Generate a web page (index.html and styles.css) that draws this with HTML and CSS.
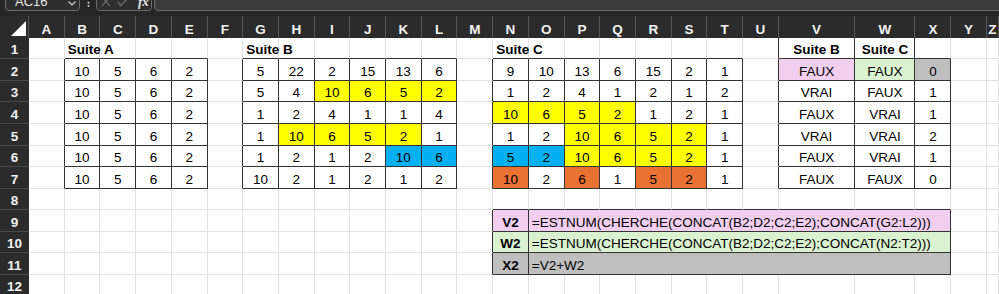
FILE: index.html
```html
<!DOCTYPE html>
<html lang="fr">
<head>
<meta charset="utf-8">
<title>Suites</title>
<link rel="stylesheet" href="styles.css">
</head>
<body>
<div class="topbar">
  <div class="namebox"><span class="nb-text">AC16</span><svg class="chev" width="8" height="5" viewBox="0 0 8 5"><path d="M0.5 0.5 L4 4 L7.5 0.5" fill="none" stroke="#cfcfcf" stroke-width="1.2"/></svg></div>
  <svg class="sep" width="3" height="8" viewBox="0 0 3 8"><circle cx="1.5" cy="2.7" r="1" fill="#d0d0d0"/><circle cx="1.5" cy="5.9" r="1" fill="#d0d0d0"/></svg>
  <div class="fxbox">
    <svg class="ico" width="10" height="8" viewBox="0 0 10 8"><path d="M1 -2 L9 7 M9 -2 L1 7" stroke="#6e6e6e" stroke-width="1.2" fill="none"/></svg>
    <svg class="ico ok" width="12" height="8" viewBox="0 0 12 8"><path d="M0.5 2.5 L4 6.5 L11.5 -1.5" stroke="#6e6e6e" stroke-width="1.2" fill="none"/></svg>
    <span class="fx">fx</span>
  </div>
  <div class="finput"></div>
</div>

<div class="sheet">
  <div class="row head">
    <div class="corner"><svg width="15" height="15" viewBox="0 0 15 15"><path d="M15 0 L15 15 L0 15 Z" fill="#ffffff"/></svg></div>
    <div>A</div><div>B</div><div>C</div><div>D</div><div>E</div><div>F</div><div>G</div><div>H</div><div>I</div><div>J</div><div>K</div><div>L</div><div>M</div><div>N</div><div>O</div><div>P</div><div>Q</div><div>R</div><div>S</div><div>T</div><div>U</div><div>V</div><div>W</div><div>X</div><div>Y</div><div>Z</div>
  </div>

  <div class="row">
    <div class="rh">1</div>
    <div></div><div class="bb l bold">Suite A</div><div class="bb"></div><div class="bb"></div><div class="bb"></div>
    <div></div><div class="bb l bold">Suite B</div><div class="bb"></div><div class="bb"></div><div class="bb"></div><div class="bb"></div><div class="bb"></div>
    <div></div><div class="bb l bold">Suite C</div><div class="bb"></div><div class="bb"></div><div class="bb"></div><div class="bb"></div><div class="bb"></div><div class="bb"></div>
    <div class="br"></div><div class="b bold">Suite B</div><div class="b bold">Suite C</div><div class="bb"></div><div></div><div></div>
  </div>

  <div class="row">
    <div class="rh">2</div>
    <div class="br"></div><div class="b">10</div><div class="b">5</div><div class="b">6</div><div class="b">2</div>
    <div class="br"></div><div class="b">5</div><div class="b">22</div><div class="b">2</div><div class="b">15</div><div class="b">13</div><div class="b">6</div>
    <div class="br"></div><div class="b">9</div><div class="b">10</div><div class="b">13</div><div class="b">6</div><div class="b">15</div><div class="b">2</div><div class="b">1</div>
    <div class="br"></div><div class="b pk">FAUX</div><div class="b gr">FAUX</div><div class="b gy">0</div><div></div><div></div>
  </div>

  <div class="row">
    <div class="rh">3</div>
    <div class="br"></div><div class="b">10</div><div class="b">5</div><div class="b">6</div><div class="b">2</div>
    <div class="br"></div><div class="b">5</div><div class="b">4</div><div class="b y">10</div><div class="b y">6</div><div class="b y">5</div><div class="b y">2</div>
    <div class="br"></div><div class="b">1</div><div class="b">2</div><div class="b">4</div><div class="b">1</div><div class="b">2</div><div class="b">1</div><div class="b">2</div>
    <div class="br"></div><div class="b">VRAI</div><div class="b">FAUX</div><div class="b">1</div><div></div><div></div>
  </div>

  <div class="row">
    <div class="rh">4</div>
    <div class="br"></div><div class="b">10</div><div class="b">5</div><div class="b">6</div><div class="b">2</div>
    <div class="br"></div><div class="b">1</div><div class="b">2</div><div class="b">4</div><div class="b">1</div><div class="b">1</div><div class="b">4</div>
    <div class="br"></div><div class="b y">10</div><div class="b y">6</div><div class="b y">5</div><div class="b y">2</div><div class="b">1</div><div class="b">2</div><div class="b">1</div>
    <div class="br"></div><div class="b">FAUX</div><div class="b">VRAI</div><div class="b">1</div><div></div><div></div>
  </div>

  <div class="row">
    <div class="rh">5</div>
    <div class="br"></div><div class="b">10</div><div class="b">5</div><div class="b">6</div><div class="b">2</div>
    <div class="br"></div><div class="b">1</div><div class="b y">10</div><div class="b y">6</div><div class="b y">5</div><div class="b y">2</div><div class="b">1</div>
    <div class="br"></div><div class="b">1</div><div class="b">2</div><div class="b y">10</div><div class="b y">6</div><div class="b y">5</div><div class="b y">2</div><div class="b">1</div>
    <div class="br"></div><div class="b">VRAI</div><div class="b">VRAI</div><div class="b">2</div><div></div><div></div>
  </div>

  <div class="row">
    <div class="rh">6</div>
    <div class="br"></div><div class="b">10</div><div class="b">5</div><div class="b">6</div><div class="b">2</div>
    <div class="br"></div><div class="b">1</div><div class="b">2</div><div class="b">1</div><div class="b">2</div><div class="b bl">10</div><div class="b bl">6</div>
    <div class="br"></div><div class="b bl">5</div><div class="b bl">2</div><div class="b y">10</div><div class="b y">6</div><div class="b y">5</div><div class="b y">2</div><div class="b">1</div>
    <div class="br"></div><div class="b">FAUX</div><div class="b">VRAI</div><div class="b">1</div><div></div><div></div>
  </div>

  <div class="row">
    <div class="rh">7</div>
    <div class="br"></div><div class="b">10</div><div class="b">5</div><div class="b">6</div><div class="b">2</div>
    <div class="br"></div><div class="b">10</div><div class="b">2</div><div class="b">1</div><div class="b">2</div><div class="b">1</div><div class="b">2</div>
    <div class="br"></div><div class="b or">10</div><div class="b">2</div><div class="b or">6</div><div class="b">1</div><div class="b or">5</div><div class="b or">2</div><div class="b">1</div>
    <div class="br"></div><div class="b">FAUX</div><div class="b">FAUX</div><div class="b">0</div><div></div><div></div>
  </div>

  <div class="row">
    <div class="rh">8</div>
    <div></div><div></div><div></div><div></div><div></div><div></div><div></div><div></div><div></div><div></div><div></div><div></div><div></div>
    <div class="bb"></div><div class="bb"></div><div class="bb"></div><div class="bb"></div><div class="bb"></div><div class="bb"></div><div class="bb"></div><div class="bb"></div><div class="bb"></div><div class="bb"></div><div class="bb"></div>
    <div></div><div></div>
  </div>

  <div class="row">
    <div class="rh">9</div>
    <div></div><div></div><div></div><div></div><div></div><div></div><div></div><div></div><div></div><div></div><div></div><div></div><div class="br"></div>
    <div class="b pk bold">V2</div><div class="b pk l span10">=ESTNUM(CHERCHE(CONCAT(B2;D2;C2;E2);CONCAT(G2:L2)))</div>
    <div></div><div></div>
  </div>

  <div class="row">
    <div class="rh">10</div>
    <div></div><div></div><div></div><div></div><div></div><div></div><div></div><div></div><div></div><div></div><div></div><div></div><div class="br"></div>
    <div class="b gr bold">W2</div><div class="b gr l span10">=ESTNUM(CHERCHE(CONCAT(B2;D2;C2;E2);CONCAT(N2:T2)))</div>
    <div></div><div></div>
  </div>

  <div class="row">
    <div class="rh">11</div>
    <div></div><div></div><div></div><div></div><div></div><div></div><div></div><div></div><div></div><div></div><div></div><div></div><div class="br"></div>
    <div class="b gy bold">X2</div><div class="b gy l span10">=V2+W2</div>
    <div></div><div></div>
  </div>

  <div class="row">
    <div class="rh">12</div>
    <div></div><div></div><div></div><div></div><div></div><div></div><div></div><div></div><div></div><div></div><div></div><div></div><div></div>
    <div></div><div></div><div></div><div></div><div></div><div></div><div></div><div></div><div></div><div></div><div></div><div></div><div></div>
  </div>
</div>
</body>
</html>
```

FILE: styles.css
```css
* { box-sizing: border-box; }

body {
  margin: 0;
  width: 999px;
  height: 294px;
  overflow: hidden;
  background: #ffffff;
  font-family: "Liberation Sans", Arial, sans-serif;
}

/* ---------- formula bar (cropped) ---------- */
.topbar {
  height: 16px;
  background: #262626;
  display: flex;
  align-items: flex-start;
  overflow: hidden;
}

.namebox {
  margin: -11px 0 0 5px;
  width: 75px;
  height: 22px;
  flex: none;
  border: 1px solid #6a6a6a;
  border-radius: 4px;
  background: #2e2e2e;
  display: flex;
  align-items: center;
  justify-content: space-between;
  padding: 2px 3px 0 9px;
  color: #e8e8e8;
  font-size: 13px;
}

.chev {
  align-self: flex-end;
  margin-bottom: 4px;
}

.sep {
  flex: none;
  margin: 0 0 0 7px;
}

.fxbox {
  margin: -11px 0 0 6px;
  width: 56px;
  height: 22px;
  flex: none;
  border: 1px solid #6a6a6a;
  border-radius: 4px;
  background: #2e2e2e;
  display: flex;
  align-items: flex-end;
  padding: 0 0 3px 4px;
}

.ok { margin-left: 6px; }

.fx {
  margin-left: 9px;
  font-family: "Liberation Serif", "Times New Roman", serif;
  font-style: italic;
  font-weight: 700;
  font-size: 13px;
  line-height: 10px;
  color: #e8e8e8;
}

.finput {
  margin: -11px -10px 0 2px;
  flex: 1;
  height: 22px;
  border: 1px solid #6a6a6a;
  border-radius: 4px;
  background: #3c3c3c;
}

/* ---------- sheet ---------- */
.sheet {
  display: grid;
  grid-template-columns: 29px repeat(21, 35.714px) 76.7px 60px 36px 35.3px 1fr;
  grid-template-rows: 21.7px;
  grid-auto-rows: 21.57px;
}

.row { display: contents; }

.row > div {
  min-width: 0;
  display: flex;
  justify-content: center;
  align-items: flex-end;
  white-space: nowrap;
  font-size: 13.5px;
  line-height: 16px;
  color: #000000;
  border-right: 1px solid #e1e1e1;
  border-bottom: 1px solid #e1e1e1;
}

.head > div {
  background: #2b2b2b;
  color: #f2f2f2;
  font-weight: 700;
  border-right: 1px solid #565656;
  border-bottom: none;
}

.head > .corner {
  justify-content: flex-end;
  padding: 0 2px 2px 0;
}

.row > .rh {
  background: #2b2b2b;
  color: #f2f2f2;
  font-weight: 700;
  border-right: none;
  border-bottom: 1px solid #474747;
}

.row > .l {
  justify-content: flex-start;
  padding-left: 3px;
}

.span10 { grid-column: span 10; }

.bold { font-weight: 700; }

.row > .b { border-right-color: #333333; border-bottom-color: #333333; }
.row > .br { border-right-color: #333333; }
.row > .bb { border-bottom-color: #333333; }

.y  { background: #ffff00; }
.bl { background: #00b0f0; }
.or { background: #e97132; }
.pk { background: #f2ceef; }
.gr { background: #daf2d0; }
.gy { background: #bfbfbf; }
```
